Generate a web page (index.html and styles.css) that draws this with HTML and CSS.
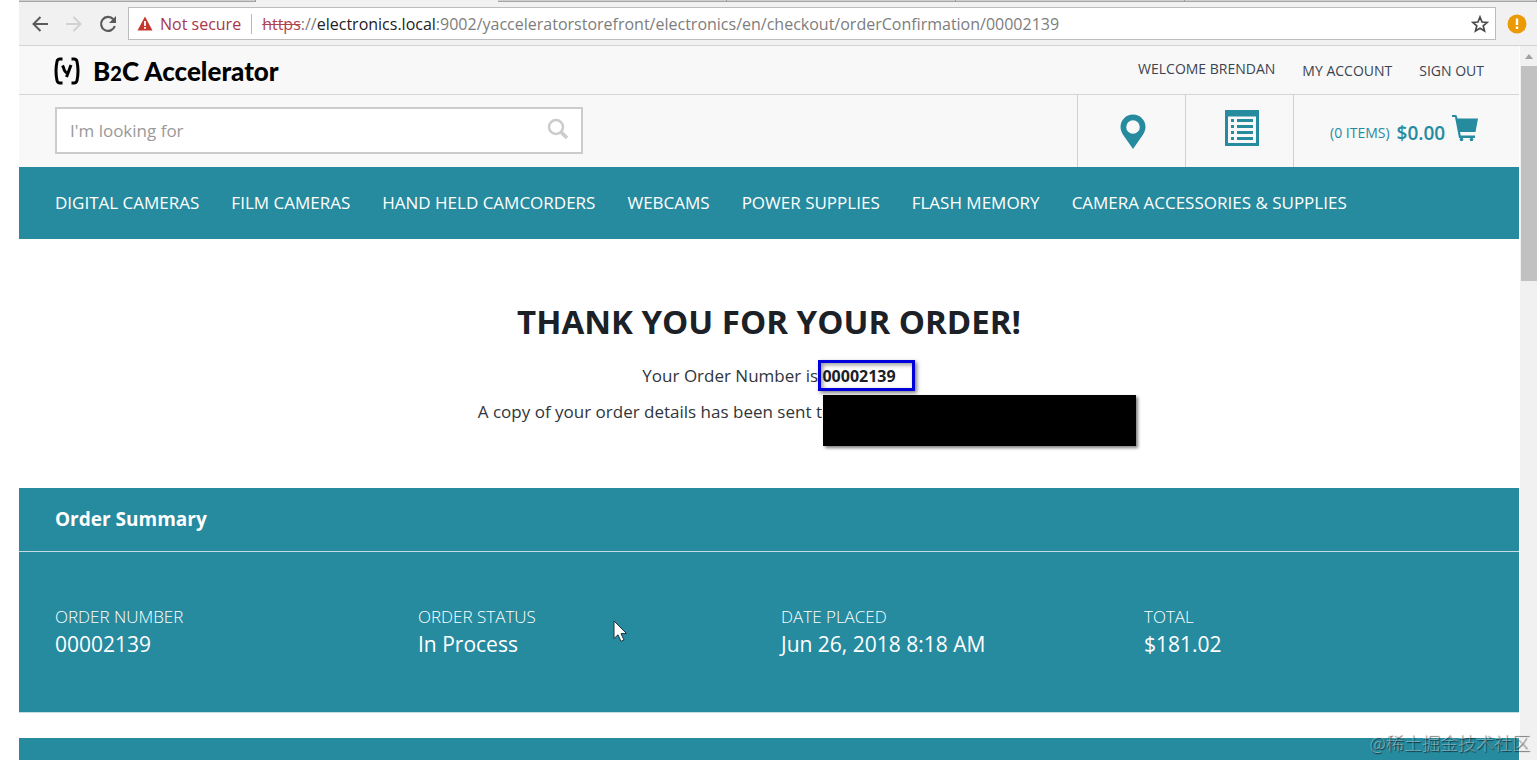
FILE: index.html
```html
<!DOCTYPE html>
<html lang="en">
<head>
    <meta charset="UTF-8">
    <meta name="viewport" content="width=device-width, initial-scale=1.0">
    <title>Order Confirmation | B2C Accelerator</title>
    <link rel="stylesheet" href="styles.css">
</head>
<body>
    <div class="window">
        <!-- Browser chrome -->
        <div class="tabs">
            <span class="tab first"></span>
            <span class="tab active"></span>
            <span class="tab"></span>
            <span class="tab"></span>
            <span class="tab"></span>
            <span class="tab rest"></span>
        </div>
        <div class="toolbar">
            <button class="tool" aria-label="Back">
                <svg width="18" height="18" viewBox="0 0 18 18" fill="none" stroke="#5a5a5a" stroke-width="2"><path d="M17 9H3M9.500 2L2.500 9l7 7"/></svg>
            </button>
            <button class="tool" aria-label="Forward" disabled>
                <svg width="18" height="18" viewBox="0 0 18 18" fill="none" stroke="#d2d2d2" stroke-width="2"><path d="M1 9h14M8.500 2l7 7-7 7"/></svg>
            </button>
            <button class="tool" aria-label="Reload">
                <svg width="18" height="18" viewBox="0 0 18 18"><path d="M14.300 4.200A7 7 0 1 0 15.800 11" fill="none" stroke="#5a5a5a" stroke-width="2.200"/><path d="M17 1v7h-7z" fill="#5a5a5a"/></svg>
            </button>
            <div class="address">
                <svg width="16" height="15" viewBox="0 0 16 15"><path d="M8 0.500L15.500 14.500H0.500z" fill="#c5372c"/><path d="M7.100 5h1.800v5H7.100zM7.100 11h1.800v1.800H7.100z" fill="#fff"/></svg>
                <span class="not-secure">Not secure</span>
                <span class="url"><s>https</s>://<b>electronics.local</b>:9002/yacceleratorstorefront/electronics/en/checkout/orderConfirmation/00002139</span>
                <button class="star" aria-label="Bookmark this page">
                    <svg width="18" height="18" viewBox="0 0 18 18" fill="none" stroke="#4a4a4a" stroke-width="1.700"><path d="M9 2l2 5 5.300.400-4.100 3.400 1.300 5.200L9 13.200 4.500 16l1.300-5.200L1.700 7.400 7 7z"/></svg>
                </button>
            </div>
            <button class="update" aria-label="Browser menu">
                <svg width="20" height="20" viewBox="0 0 20 20"><circle cx="10" cy="10" r="9.500" fill="#eb9a05"/><path d="M8.800 4.500h2.400v6.500H8.800zM8.800 12.500h2.400v2.400H8.800z" fill="#fff"/></svg>
            </button>
        </div>

        <div class="viewport">
            <div class="page">
                <header>
                    <div class="header-top">
                        <a class="logo" href="#">
                            <svg width="26" height="28" viewBox="0 0 26 28" fill="none" stroke="#000" stroke-width="3"><path d="M8.500 2H6Q3.500 2 3 4.500 1 14 3 23.500 3.500 26 6 26h2.500M17.500 2H20q2.500 0 3 2.500 2 9.500 0 19-.5 2.500-3 2.500h-2.500"/><path d="M8.500 8.500l1 2q1 5 4 5.500M17 8l-4.500 12"/></svg>
                            <span>B<span class="small-two">2</span>C Accelerator</span>
                        </a>
                        <nav class="account">
                            <span class="welcome">Welcome Brendan</span>
                            <a class="my-account" href="#">My Account</a>
                            <a href="#">Sign Out</a>
                        </nav>
                    </div>
                    <div class="header-main">
                        <form class="search">
                            <input type="text" aria-label="Search" placeholder="I'm looking for">
                            <button type="button" aria-label="Search">
                                <svg width="22" height="22" viewBox="0 0 22 22" fill="none" stroke="#ccc"><circle cx="9" cy="9" r="7" stroke-width="2.600"/><path d="M14 14l6 6" stroke-width="3.600"/></svg>
                            </button>
                        </form>
                        <a class="cell" href="#" aria-label="Store Finder">
                            <svg width="26" height="36" viewBox="0 0 26 36"><path fill="#268b9f" fill-rule="evenodd" d="M13 0.500C6 0.500 0.500 6 0.500 13c0 4 2 7 4.500 10.500L13 35l8-11.500C23.500 20 25.500 17 25.500 13 25.500 6 20 0.500 13 0.500zM13 6.200a6.800 6.800 0 1 1 0 13.600 6.800 6.800 0 0 1 0-13.600z"/></svg>
                        </a>
                        <a class="cell list" href="#" aria-label="Import Saved Cart">
                            <svg width="34" height="36" viewBox="0 0 34 36" fill="#268b9f"><path fill-rule="evenodd" d="M0 0h34v36H0zM3 6.500v26.500h28V6.500z"/><path d="M6 9h3v3H6zM6 15h3v3H6zM6 21h3v3H6zM6 27h3v3H6zM12 9h16v3H12zM12 15h16v3H12zM12 21h16v3H12zM12 27h16v3H12z"/></svg>
                        </a>
                        <a class="cart" href="#">
                            <span class="items">(0 items)</span>
                            <span class="amount">$0.00</span>
                            <svg width="26" height="27" viewBox="0 0 26 27" fill="#268b9f"><path d="M0 0h3.500q1 0 1.300 1l.700 2.500H26l-2.500 13.500H8l.800 3.500H23V23H7L3 2H0z"/><circle cx="9.500" cy="24.500" r="1.800"/><circle cx="19.500" cy="24.500" r="1.800"/></svg>
                        </a>
                    </div>
                    <nav class="categories">
                        <a href="#">Digital Cameras</a>
                        <a href="#">Film Cameras</a>
                        <a href="#">Hand Held Camcorders</a>
                        <a href="#">Webcams</a>
                        <a href="#">Power Supplies</a>
                        <a href="#">Flash Memory</a>
                        <a href="#">Camera Accessories &amp; Supplies</a>
                    </nav>
                </header>

                <main>
                    <section class="thanks">
                        <h1>Thank you for your Order!</h1>
                        <p>Your Order Number is <strong class="order-code">00002139<span class="highlight"></span></strong></p>
                        <p>A copy of your order details has been sent to<span class="email"><span class="redacted"></span></span></p>
                    </section>

                    <section class="summary">
                        <h2>Order Summary</h2>
                        <dl>
                            <div>
                                <dt>Order Number</dt>
                                <dd>00002139</dd>
                            </div>
                            <div>
                                <dt>Order Status</dt>
                                <dd>In Process</dd>
                            </div>
                            <div>
                                <dt>Date Placed</dt>
                                <dd>Jun 26, 2018 8:18 AM</dd>
                            </div>
                            <div>
                                <dt>Total</dt>
                                <dd>$181.02</dd>
                            </div>
                        </dl>
                    </section>
                    <section class="next-section"></section>
                </main>
            </div>

            <div class="scrollbar">
                <span class="arrow"></span>
                <span class="thumb"></span>
            </div>
        </div>
    </div>

    <svg class="cursor" width="15" height="23" viewBox="0 0 15 23"><path d="M1 1v17.500l4-3.700 3 6.500 3-1.300-3-6.400h5.600z" fill="#fff" stroke="#1d3440" stroke-width="1"/></svg>
    <div class="watermark">@稀土掘金技术社区</div>
</body>
</html>
```
FILE: styles.css
```css
* {
    box-sizing: border-box;
}

body {
    margin: 0;
    background: #fff;
    color: #1c2127;
    font-family: "Open Sans", sans-serif;
    font-size: 16px;
    overflow: hidden;
}

a {
    color: inherit;
    text-decoration: none;
}

button {
    display: flex;
    padding: 0;
    border: 0;
    background: none;
}

svg {
    display: block;
    flex: none;
}

.window {
    display: flex;
    flex-direction: column;
    height: 100vh;
    margin-left: 19px;
}

/* Browser chrome */
.tabs {
    display: flex;
    height: 2px;
    background: #f1f1f1;
}

.tab {
    width: 229px;
    background: #cfcfcf;
    border-right: 1px solid #999;
    border-bottom: 1px solid #a5a5a5;
}

.tab.first {
    width: 237px;
}

.tab.active {
    width: 242px;
    background: #f1f1f1;
    border: 0;
}

.tab.rest {
    flex: 1;
}

.toolbar {
    display: flex;
    align-items: center;
    height: 44px;
    padding: 0 10px 0 12px;
    background: #f1f1f1;
    border-bottom: 1px solid #d4d4d4;
}

.tool {
    width: 18px;
    margin-right: 16px;
}

.address {
    display: flex;
    flex: 1;
    align-items: center;
    height: 33px;
    margin-right: 11px;
    margin-left: -5px;
    padding: 0 6px 0 8px;
    background: #fff;
    border: 1px solid #bcbcbc;
    font-size: 16px;
    white-space: nowrap;
}

.not-secure {
    margin-left: 7px;
    padding-right: 10px;
    border-right: 1px solid #bbb;
    line-height: 20px;
    color: #a8364a;
}

.url {
    flex: 1;
    margin-left: 10px;
    color: #7d7d7d;
}

.url s {
    color: #b04350;
}

.url b {
    color: #222;
    font-weight: 400;
}

.viewport {
    display: grid;
    grid-template-columns: 1fr 18px;
    flex: 1;
    min-height: 0;
}

.page {
    display: flex;
    flex-direction: column;
    overflow: hidden;
}

.scrollbar {
    display: flex;
    flex-direction: column;
    align-items: flex-end;
    background: #f1f1f1;
    border-left: 1px solid #fff;
}

.arrow {
    margin: 8px 4px 7px;
    border: 4px solid transparent;
    border-top: 0;
    border-bottom: 5px solid #a0a0a0;
}

.thumb {
    width: 16px;
    height: 215px;
    background: #c1c1c1;
}

/* Header */
.header-top {
    display: flex;
    align-items: center;
    justify-content: space-between;
    height: 49px;
    padding: 2px 35px 0;
    background: #f8f8f8;
    border-bottom: 1px solid #d5d5d5;
}

.logo {
    display: flex;
    align-items: center;
    gap: 13px;
    color: #000;
    font-family: Lato, sans-serif;
    font-size: 26px;
    font-weight: 900;
}

.small-two {
    font-size: 20px;
}

.account {
    display: flex;
    gap: 27px;
    font-size: 14px;
    line-height: 20px;
    text-transform: uppercase;
    color: #3c4450;
}

.welcome {
    margin-top: -2px;
}

.header-main {
    display: flex;
    height: 72px;
    background: #f8f8f8;
}

.search {
    display: flex;
    align-items: center;
    width: 528px;
    height: 47px;
    margin: 12px auto 0 36px;
    padding: 0 12px 0 13px;
    background: #fff;
    border: 2px solid #ccc;
}

.search input {
    flex: 1;
    padding: 0;
    border: 0;
    outline: 0;
    color: #333;
    font: 17px "Open Sans", sans-serif;
}

.search input::placeholder {
    color: #999;
}

.search button {
    margin-bottom: 4px;
}

.cell {
    display: flex;
    align-items: center;
    justify-content: center;
    width: 108px;
    padding: 2px 0 0 2px;
    border-left: 1px solid #d0d0d0;
}

.cell.list {
    padding: 0 0 6px 4px;
}

.cart {
    display: flex;
    align-items: center;
    gap: 7px;
    width: 226px;
    padding-top: 3px;
    padding-left: 36px;
    border-left: 1px solid #d0d0d0;
    color: #268b9f;
}

.items {
    font-size: 14px;
    text-transform: uppercase;
}

.amount {
    font-size: 19px;
    font-weight: 600;
}

.cart svg {
    margin-bottom: 8px;
}

.categories {
    display: flex;
    align-items: center;
    gap: 32px;
    height: 72px;
    padding: 0 36px 2px;
    background: #268b9f;
    color: #fff;
    font-size: 17px;
    text-transform: uppercase;
    white-space: nowrap;
}

/* Confirmation message */
main {
    display: flex;
    flex: 1;
    flex-direction: column;
}

.thanks {
    padding: 59px 0 58px;
    text-align: center;
}

h1 {
    margin: 0 0 12px;
    font-size: 33px;
    font-weight: 700;
    line-height: 48px;
    text-transform: uppercase;
}

.thanks p {
    margin: 0;
    color: #30353b;
    font-size: 17px;
    line-height: 36px;
}

.order-code {
    position: relative;
    color: #1c2127;
    font-size: 16px;
    font-weight: 700;
}

.highlight {
    position: absolute;
    top: -5px;
    left: -4px;
    width: 97px;
    height: 31px;
    border: 3px solid #0000dc;
    box-shadow: 2px 2px 4px rgba(0,0,0,0.5), inset 2px 2px 4px rgba(0,0,0,0.4);
}

.email {
    display: inline-block;
    position: relative;
    width: 228px;
    height: 16px;
}

.redacted {
    position: absolute;
    top: -7px;
    left: -9px;
    width: 313px;
    height: 51px;
    background: #000;
    box-shadow: 2px 2px 3px rgba(0,0,0,0.5);
}

/* Order summary */
.summary {
    background: #268b9f;
    border-bottom: 1px solid #c5dde2;
    color: #fff;
}

h2 {
    margin: 0;
    padding: 0 36px;
    border-bottom: 1px solid #c5dde2;
    font-size: 19px;
    font-weight: 700;
    line-height: 63px;
}

dl {
    display: grid;
    grid-template-columns: repeat(4, 1fr);
    gap: 24px;
    margin: 0;
    padding: 52px 36px 54px;
}

dt {
    font-size: 17px;
    font-weight: 300;
    line-height: 26px;
    text-transform: uppercase;
}

dd {
    margin: 0;
    font-size: 21px;
    line-height: 28px;
}

.next-section {
    flex: 1;
    margin-top: 25px;
    background: #268b9f;
}

.cursor {
    position: absolute;
    top: 620px;
    left: 613px;
}

.watermark {
    position: absolute;
    right: 7px;
    bottom: 5px;
    color: rgba(255,255,255,0.4);
    font-family: "Noto Sans CJK SC", sans-serif;
    font-size: 18px;
    font-weight: 300;
    line-height: 26px;
    text-shadow: 1px 1px 1px rgba(0,0,0,0.65);
}
```
